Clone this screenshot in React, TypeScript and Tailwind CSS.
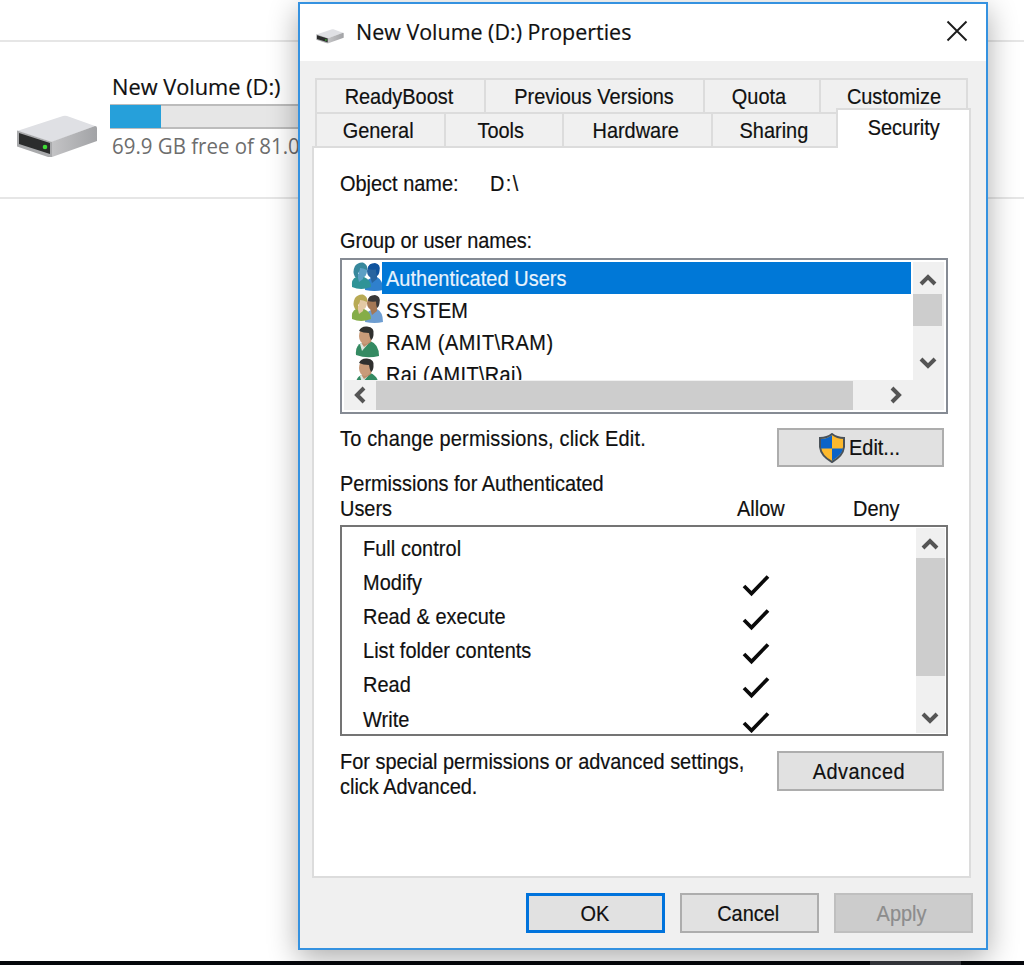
import type { ReactNode } from 'react';
import clsx from 'clsx';

const upperTabs = [
  { label: 'ReadyBoost', className: 'w-[169px] pr-1' },
  { label: 'Previous Versions', className: 'w-[219px]' },
  { label: 'Quota', className: 'w-[116px] pr-1.5' },
  { label: 'Customize', className: 'w-[149px] border-r-2' },
];

const lowerTabs = [
  { label: 'General', className: 'w-[129px] pr-1' },
  { label: 'Tools', className: 'w-[118px] pr-[7px]' },
  { label: 'Hardware', className: 'w-[149px] pr-1' },
  { label: 'Sharing', className: 'w-[125px] pr-px' },
];

const principals = [
  { name: 'Authenticated Users', kind: 'group', selected: true, tracking: 'tracking-[0.06px]' },
  { name: 'SYSTEM', kind: 'group', selected: false, tracking: 'tracking-normal' },
  { name: 'RAM (AMIT\\RAM)', kind: 'user', selected: false, tracking: 'tracking-[0.55px]' },
  { name: 'Raj (AMIT\\Raj)', kind: 'user', selected: false, tracking: 'tracking-[0.4px]' },
];

const permissions = [
  { name: 'Full control', allow: false },
  { name: 'Modify', allow: true },
  { name: 'Read & execute', allow: true },
  { name: 'List folder contents', allow: true },
  { name: 'Read', allow: true },
  { name: 'Write', allow: true },
];

interface LabelProps {
  children: ReactNode;
  className?: string;
}

// Dialog text is slightly condensed
function Label({ children, className }: LabelProps) {
  return (
    <span
      className={clsx(
        'inline-block scale-x-[0.906] whitespace-pre text-[22px] leading-[25px] [-webkit-text-stroke:0.2px]',
        className ?? 'origin-left',
      )}
    >
      {children}
    </span>
  );
}

function DriveIcon({ className }: { className: string }) {
  return (
    <svg viewBox="0 0 82 44" className={className} preserveAspectRatio="none">
      <defs>
        <linearGradient id="driveSide" x1="0" y1="0" x2="1" y2="0">
          <stop offset="0" stopColor="#c4c4c6" />
          <stop offset="1" stopColor="#a2a3a6" />
        </linearGradient>
      </defs>
      <path d="M1 16 L47 1 Q49 0.500 51 1 L79 11 L36 27 Z" fill="#dfe0e4" />
      <path d="M35 27 L79 11 Q81 11 81 13 V26 L36 42 Z" fill="url(#driveSide)" />
      <path d="M1 15.500 L36 27 V42 L32 42 L1 31.500 Z" fill="#a9aaac" />
      <path d="M3 18 L34 28 V39 L3 29 Z" fill="#2b2c2c" />
      <circle cx="29" cy="32" r="2.300" fill="#3fdc35" />
    </svg>
  );
}

function GroupIcon({ selected }: { selected: boolean }) {
  const hair = selected ? '#38889c' : '#b8aa55';
  const face = selected ? '#5c9fc4' : '#e3c9a5';
  const shirt = selected ? '#2f9397' : '#85ad48';
  const backHair = selected ? '#0f539e' : '#393838';
  const backFace = selected ? '#28649f' : '#a47855';
  const backShirt = selected ? '#2f80cd' : '#6d9dd1';
  return (
    <svg viewBox="0 0 32 29" className="h-[29px] w-8">
      <path d="M14 28 Q14 18 20 16 L26 15 Q32 18 32 28 Q24 30 14 28Z" fill={backShirt} />
      <path d="M19 14 L26 12 L26 17 L21 21Z" fill={backFace} />
      <ellipse cx="21.500" cy="9" rx="5.500" ry="7" fill={backFace} />
      <path d="M17 7 Q17 1 24 1 Q30 2 28.500 9 Q28 13 26 14 Q25 11 25 7.500 Q20 8 17 7Z" fill={backHair} />
      <path d="M1 25 Q0 17 5 15 L13 15 Q20 18 20 25 Q10 29 1 25Z" fill={shirt} />
      <path d="M6 12 L13 12 L12 17 L8 20Z" fill={face} />
      <path d="M4 15 Q1 10 4 4 Q7 0 12 0.500 Q17 3 16 8 L7 10 L7 16Z" fill={hair} />
      <ellipse cx="11.500" cy="9" rx="4.500" ry="6.500" fill={face} />
      <path d="M6 11 Q5 2 11 1 Q17 2 16 8 Q12 6 9 6 Q9 10 6 11Z" fill={hair} />
    </svg>
  );
}

function UserIcon() {
  return (
    <svg viewBox="0 0 32 32" className="h-8 w-8">
      <path d="M5 29 Q4 19 11 17 L19 15 Q28 18 28 30 Q16 33 5 29Z" fill="#348a62" />
      <path d="M9 18 L13 16 L17 18 L11 25Z" fill="#dbe6de" />
      <path d="M11 13 L21 11 L20 16 L13 21 L11 18Z" fill="#bd8d6c" />
      <ellipse cx="14" cy="10" rx="6" ry="8" fill="#c99b79" />
      <path d="M8 5 Q10 0 16 0.500 Q24 1 22.500 9 Q22 13 20 14 Q18.500 11 18 7 Q12 7 8 5Z" fill="#30302f" />
    </svg>
  );
}

function ShieldIcon() {
  return (
    <svg viewBox="0 0 28 30" className="h-[30px] w-7">
      <path
        d="M14 1 Q9 5 2 5 V14 Q3 23 14 29 Q25 23 26 14 V5 Q19 5 14 1Z"
        fill="#fdb92d"
        stroke="#4a5259"
        strokeWidth="2"
      />
      <path d="M14 2.300 Q9 6 3 6 V15.500 H14Z" fill="#0c63c7" />
      <path d="M14 15.500 H25 Q23.500 22.500 14 27.700Z" fill="#0c63c7" />
    </svg>
  );
}

const arrowPaths = {
  up: 'M2 13 L9 6 L16 13',
  down: 'M2 5 L9 12 L16 5',
  left: 'M13 2 L6 9 L13 16',
  right: 'M5 2 L12 9 L5 16',
};

function Arrow({ direction }: { direction: keyof typeof arrowPaths }) {
  return (
    <svg viewBox="0 0 18 18" className="h-[18px] w-[18px]">
      <path d={arrowPaths[direction]} fill="none" stroke="#555555" strokeWidth="4" />
    </svg>
  );
}

function CheckMark() {
  return (
    <svg viewBox="0 0 28 24" className="h-6 w-7">
      <path
        d="M2 12 L9.500 19.500 L26 2.500"
        fill="none"
        stroke="#0a0a0a"
        strokeWidth="3.700"
      />
    </svg>
  );
}

interface ButtonProps {
  children: ReactNode;
  className: string;
}

function Button({ children, className }: ButtonProps) {
  return (
    <button type="button" className={clsx('flex shrink-0 items-center justify-center', className)}>
      {children}
    </button>
  );
}

function Explorer() {
  return (
    <div className="flex h-[965px] flex-col bg-white">
      <div className="h-[42px] border-b-2 border-[#e6e6e6]" />
      <div className="flex h-[157px] border-b-2 border-[#e6e6e6] pl-4">
        <DriveIcon className="mt-[73px] h-11 w-[82px]" />
        <div className="ml-3 mt-[29px] flex-1">
          <div className="pl-0.5 font-['Open_Sans',sans-serif] text-[22px] leading-[31px] text-[#101010]">
            <span className="inline-block origin-left scale-x-[0.99] whitespace-pre [-webkit-text-stroke:0.2px]">
              New Volume (D:)
            </span>
          </div>
          <div className="mt-0.5 flex h-[25px] w-[400px] border-y-2 border-[#bcbcbc] bg-[#e6e6e6]">
            <div className="-my-px w-[51px] bg-[#26a0da]" />
          </div>
          <div className="pl-0.5 font-['Open_Sans',sans-serif] text-[22px] leading-[32px] text-[#6d6d6d]">
            <span className="inline-block origin-left scale-x-[0.93] whitespace-pre">
              69.9 GB free of 81.0 GB
            </span>
          </div>
        </div>
      </div>
      <div className="mt-auto flex h-1 bg-[#05070b]">
        <div className="ml-[870px] w-[91px] bg-[#393b40]" />
      </div>
    </div>
  );
}

function TabStrip() {
  return (
    <div className="ml-[15px]">
      <div className="flex h-[34px]">
        {upperTabs.map((tab) => (
          <div
            key={tab.label}
            className={clsx('flex justify-center border-l-2 border-t-2 border-[#dcdcdc] pt-1', tab.className)}
          >
            <Label className="origin-center">{tab.label}</Label>
          </div>
        ))}
      </div>
      <div className="flex h-[34px]">
        {lowerTabs.map((tab) => (
          <div
            key={tab.label}
            className={clsx('flex justify-center border-l-2 border-t-2 border-[#dcdcdc] pt-1', tab.className)}
          >
            <Label className="origin-center">{tab.label}</Label>
          </div>
        ))}
        <div className="z-10 -mt-1 flex h-10 w-[135px] justify-center border-x-2 border-t-2 border-[#dcdcdc] bg-white pt-[5px]">
          <Label className="origin-center">Security</Label>
        </div>
      </div>
    </div>
  );
}

function PrincipalList() {
  return (
    <div className="h-[156px] w-[608px] border-2 border-[#868b94] bg-white p-0.5">
      <div className="flex h-[118px]">
        <div className="flex-1 overflow-hidden">
          {principals.map((item) => (
            <div key={item.name} className="flex h-8">
              <div className="w-[38px] shrink-0 pl-[7px]">
                {item.kind === 'group' ? <GroupIcon selected={item.selected} /> : <UserIcon />}
              </div>
              <div
                className={clsx(
                  'mr-0.5 flex-1 pl-1 pt-1',
                  item.selected ? 'bg-[#0078d7] text-[#e8f3fd]' : 'text-[#101010]',
                )}
              >
                <Label className={clsx('origin-left', item.tracking)}>{item.name}</Label>
              </div>
            </div>
          ))}
        </div>
        <div className="flex w-[31px] flex-col bg-[#f0f0f0]">
          <div className="flex h-8 w-[29px] items-center justify-center pt-1">
            <Arrow direction="up" />
          </div>
          <div className="h-8 w-[29px] bg-[#cdcdcd]" />
          <div className="mt-auto flex h-9 w-[29px] items-center justify-center pt-0.5">
            <Arrow direction="down" />
          </div>
        </div>
      </div>
      <div className="flex h-[30px] items-center bg-[#f0f0f0]">
        <div className="flex w-8 items-center justify-center">
          <Arrow direction="left" />
        </div>
        <div className="h-[29px] w-[477px] bg-[#cdcdcd]" />
        <div className="ml-[34px]">
          <Arrow direction="right" />
        </div>
      </div>
    </div>
  );
}

function PermissionList() {
  return (
    <div className="flex h-[211px] w-[608px] justify-between border-2 border-[#747474] bg-white p-px">
      <div className="flex-1 overflow-hidden pt-[3px]">
        {permissions.map((item) => (
          <div key={item.name} className="flex h-[34.200px] items-center pl-5">
            <Label className="w-[379px] origin-left tracking-[0.06px]">{item.name}</Label>
            {item.allow && (
              <div className="pt-[7px]">
                <CheckMark />
              </div>
            )}
          </div>
        ))}
      </div>
      <div className="flex w-[29px] flex-col bg-[#f0f0f0]">
        <div className="flex h-[30px] w-7 items-center justify-center pt-0.5">
          <Arrow direction="up" />
        </div>
        <div className="h-[118px] bg-[#cdcdcd]" />
        <div className="mt-auto flex h-[30px] w-7 items-center justify-center">
          <Arrow direction="down" />
        </div>
      </div>
    </div>
  );
}

function SecurityPage() {
  return (
    <div className="ml-3 h-[732px] w-[659px] border-2 border-[#dcdcdc] bg-white pl-[26px] pt-[23px]">
      <div className="flex h-[25px]">
        <Label className="w-[150px] origin-left">Object name:</Label>
        <Label className="origin-left tracking-[1.500px]">D:\</Label>
      </div>
      <div className="mb-[5px] mt-8 h-[25px]">
        <Label className="origin-left tracking-[-0.100px]">Group or user names:</Label>
      </div>
      <PrincipalList />
      <div className="mt-3 flex h-[41px]">
        <div className="w-[437px]">
          <Label className="origin-left tracking-[0.220px]">To change permissions, click Edit.</Label>
        </div>
        <Button className="mt-0.5 h-[39px] w-[167px] border-2 border-[#adadad] bg-[#e1e1e1]">
          <ShieldIcon />
          <Label className="ml-[3px] -mr-0.5 origin-left">Edit...</Label>
        </Button>
      </div>
      <div className="mb-1 mt-1 flex h-[50px] items-end">
        <div className="h-[50px] w-[397px]">
          <Label>{'Permissions for Authenticated\nUsers'}</Label>
        </div>
        <Label className="w-[116px] origin-left">Allow</Label>
        <Label>Deny</Label>
      </div>
      <PermissionList />
      <div className="mt-[15px] flex">
        <div className="-mt-0.5 h-[50px] w-[437px]">
          <Label>{'For special permissions or advanced settings,\nclick Advanced.'}</Label>
        </div>
        <Button className="h-10 w-[167px] border-2 border-[#adadad] bg-[#e1e1e1] pr-1">
          <Label className="origin-center tracking-[0.500px]">Advanced</Label>
        </Button>
      </div>
    </div>
  );
}

export default function App() {
  return (
    <div className="relative h-[965px] w-[1024px] overflow-hidden">
      <Explorer />
      <div className="absolute left-[298px] top-0.5 h-[948px] w-[690px] border-2 border-[#3592e0] bg-[#f0f0f0] font-['Liberation_Sans',Arial,sans-serif] text-[#101010] shadow-[0_8px_28px_rgba(0,0,0,0.33)]">
        <header className="flex h-[57px] items-center bg-white pl-4">
          <DriveIcon className="mt-2 h-[15px] w-7" />
          <h1 className="-mt-1 ml-3 flex-1 font-['Open_Sans',sans-serif] text-[22px] leading-[30px]">
            <span className="inline-block origin-left scale-x-[0.975] whitespace-pre [-webkit-text-stroke:0.2px]">
              New Volume (D:) Properties
            </span>
          </h1>
          <button type="button" className="mb-1 mr-[18px]">
            <svg viewBox="0 0 22 22" className="h-[22px] w-[22px]">
              <path d="M1.500 1.500 L20.500 20.500 M20.500 1.500 L1.500 20.500" stroke="#1c1c1c" strokeWidth="1.900" />
            </svg>
          </button>
        </header>
        <main className="pt-[17px]">
          <TabStrip />
          <SecurityPage />
        </main>
        <footer className="mr-[13px] mt-[15px] flex justify-end gap-[15px]">
          <Button className="h-10 w-[139px] border-[3px] border-[#0073dc] bg-[#e1e1e1] pr-0.5">
            <Label className="origin-center">OK</Label>
          </Button>
          <Button className="h-10 w-[139px] border-2 border-[#adadad] bg-[#e1e1e1] pr-[3px]">
            <Label className="origin-center">Cancel</Label>
          </Button>
          <Button className="h-10 w-[139px] border-2 border-[#bfbfbf] bg-[#cccccc] pr-1 text-[#8c8c8c]">
            <Label className="origin-center">Apply</Label>
          </Button>
        </footer>
      </div>
    </div>
  );
}
